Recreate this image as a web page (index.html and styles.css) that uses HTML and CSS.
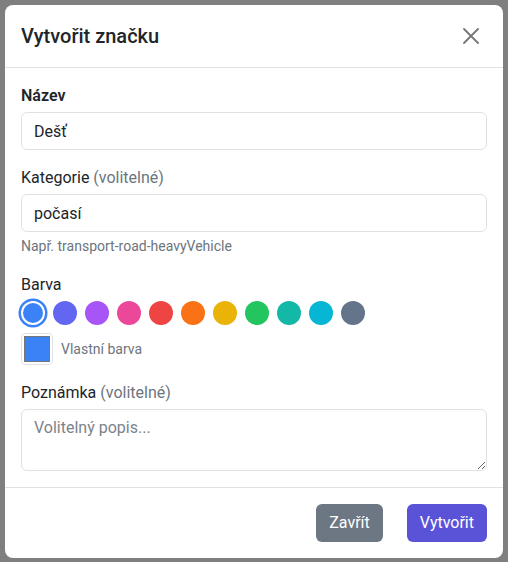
FILE: index.html
```html
<!DOCTYPE html>
<html>
  <head>
    <title>Vytvořit značku</title>
    <link rel="stylesheet" href="styles.css">
  </head>
  <body>
    <div class="modal">
      <div class="modal-header">
        <h5 class="modal-title">Vytvořit značku</h5>
        <button class="btn-close" type="button" aria-label="Zavřít">
          <svg width="16" height="16" viewBox="0 0 16 16">
            <path d="M1 1L15 15M15 1L1 15" stroke="#767676" stroke-width="1.8" stroke-linecap="round"/>
          </svg>
        </button>
      </div>
      <form class="modal-body">
        <div class="field">
          <label class="label label-strong" for="name">Název</label>
          <input class="control" id="name" type="text" value="Dešť">
        </div>
        <div class="field">
          <label class="label" for="category">Kategorie <span class="muted">(volitelné)</span></label>
          <input class="control" id="category" type="text" value="počasí">
          <div class="hint">Např. transport-road-heavyVehicle</div>
        </div>
        <div class="field">
          <div class="label">Barva</div>
          <div class="swatches">
            <span class="swatch selected" style="background:#3b82f6"></span>
            <span class="swatch" style="background:#6366f1"></span>
            <span class="swatch" style="background:#a855f7"></span>
            <span class="swatch" style="background:#ec4899"></span>
            <span class="swatch" style="background:#ef4444"></span>
            <span class="swatch" style="background:#f97316"></span>
            <span class="swatch" style="background:#eab308"></span>
            <span class="swatch" style="background:#22c55e"></span>
            <span class="swatch" style="background:#14b8a6"></span>
            <span class="swatch" style="background:#06b6d4"></span>
            <span class="swatch" style="background:#64748b"></span>
          </div>
          <div class="custom">
            <span class="picker"><span class="picker-fill" style="background:#3b82f6"></span></span>
            <span class="custom-text">Vlastní barva</span>
          </div>
        </div>
        <div class="field last">
          <label class="label" for="note">Poznámka <span class="muted">(volitelné)</span></label>
          <textarea class="control area" id="note" rows="2" placeholder="Volitelný popis..."></textarea>
        </div>
      </form>
      <div class="modal-footer">
        <button class="btn btn-secondary" type="button">Zavřít</button>
        <button class="btn btn-primary" type="submit">Vytvořit</button>
      </div>
    </div>
  </body>
</html>
```

FILE: styles.css
```css
* {
  box-sizing: border-box;
}

html, body {
  height: 100%;
}

body {
  margin: 0;
  padding: 5px;
  background-color: #7f7f7f;
  font-family: Roboto, "Noto Sans", sans-serif;
  font-size: 16px;
  line-height: 1.5;
  color: #212529;
}

.modal {
  background: #fff;
  border-radius: 8px;
  overflow: hidden;
}

.modal-header {
  display: flex;
  align-items: center;
  justify-content: space-between;
  padding: 16px;
  border-bottom: 1px solid #dee2e6;
}

.modal-title {
  margin: 0;
  font-size: 20px;
  font-weight: 500;
  line-height: 30px;
}

.btn-close {
  display: flex;
  padding: 4px;
  margin-right: 4px;
  border: 0;
  background: none;
}

.modal-body {
  padding: 16px;
}

.field {
  margin-bottom: 16px;
}

.field.last {
  margin-bottom: 0;
}

.label {
  display: block;
  margin-bottom: 4px;
}

.label-strong {
  font-weight: 600;
}

.muted {
  color: #6c757d;
}

.control {
  display: block;
  width: 100%;
  height: 38px;
  padding: 6px 12px;
  font: inherit;
  color: #212529;
  border: 1px solid #dee2e6;
  border-radius: 6px;
  background: #fff;
}

.area {
  height: 62px;
  resize: vertical;
}

.area::placeholder {
  color: #7b838b;
}

.hint {
  margin-top: 4px;
  font-size: 14px;
  color: #6c757d;
}

.swatches {
  display: flex;
  gap: 8px;
}

.swatch {
  width: 24px;
  height: 24px;
  border-radius: 50%;
}

.swatch.selected {
  border: 2px solid #fff;
  box-shadow: 0 0 0 2.5px #3b82f6;
}

.custom {
  display: flex;
  align-items: center;
  gap: 8px;
  margin-top: 8px;
}

.picker {
  display: flex;
  width: 32px;
  height: 32px;
  padding: 2px;
  border: 1px solid #dee2e6;
  border-radius: 4px;
}

.picker-fill {
  flex: 1;
  border: 1px solid #767676;
}

.custom-text {
  font-size: 14px;
  color: #6c757d;
}

.modal-footer {
  display: flex;
  justify-content: flex-end;
  gap: 24px;
  padding: 16px;
  border-top: 1px solid #dee2e6;
}

.btn {
  height: 38px;
  padding: 0 13px;
  font: inherit;
  color: #fff;
  border: 0;
  border-radius: 6px;
}

.btn-secondary {
  background: #6c7783;
}

.btn-primary {
  background: #5a53d8;
}
```
